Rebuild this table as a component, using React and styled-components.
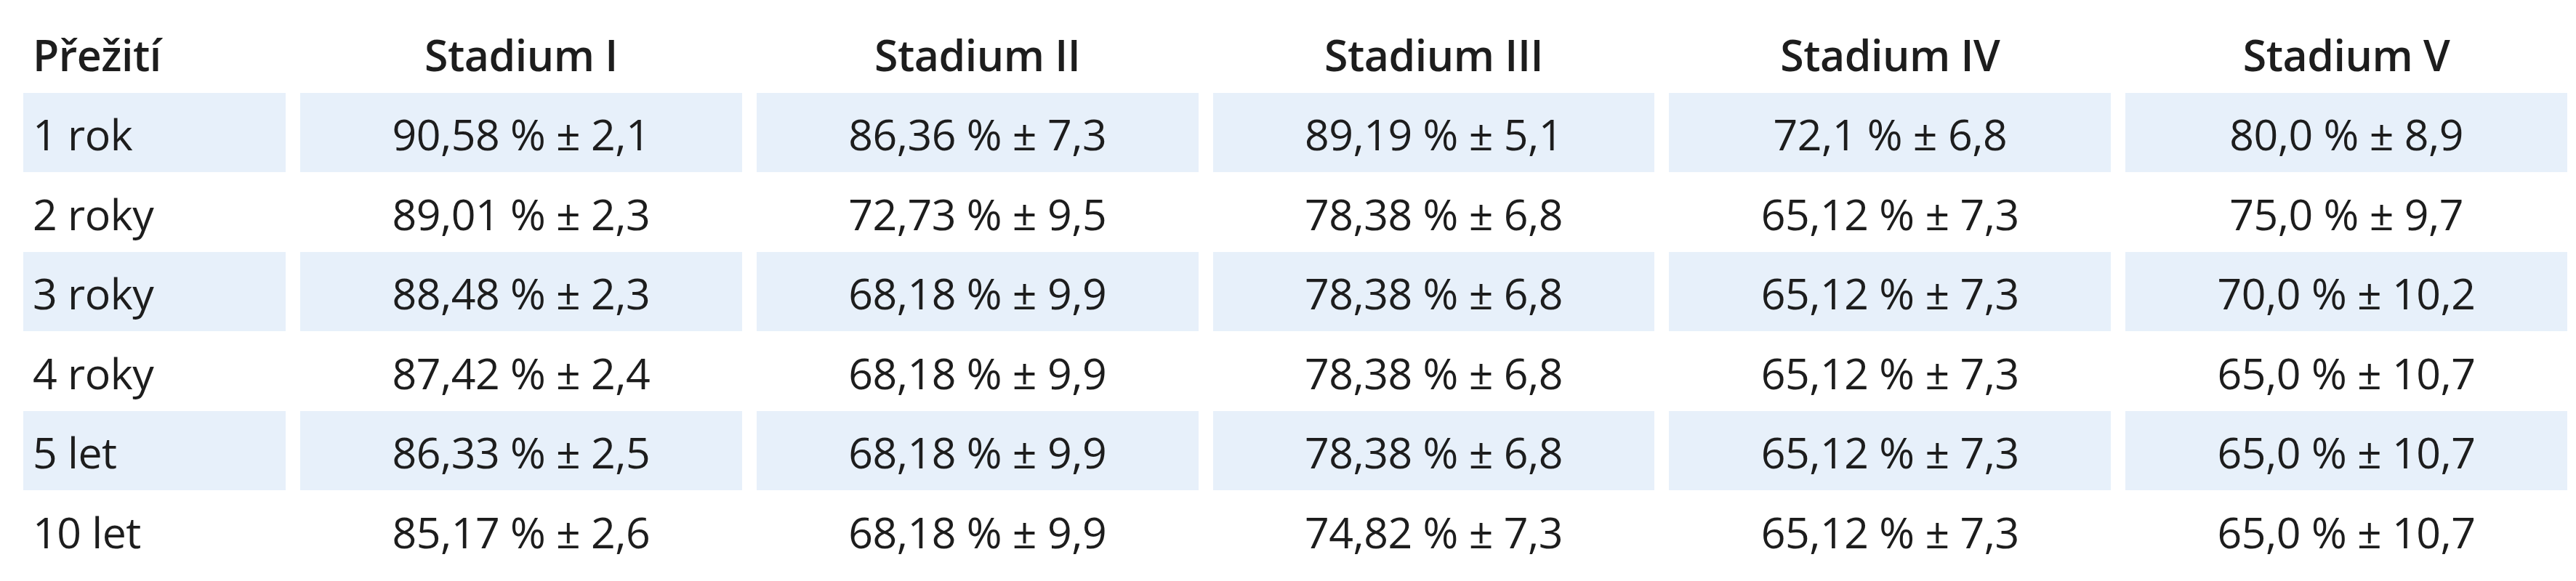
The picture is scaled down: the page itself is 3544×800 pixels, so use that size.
import React from 'react'
import styled, { createGlobalStyle } from 'styled-components'

const GlobalStyle = createGlobalStyle`
  html, body {
    margin: 0;
    padding: 0;
    background: #ffffff;
  }
  body {
    font-family: "Open Sans", "Liberation Sans", sans-serif;
    color: #1d1d1d;
  }
`;

const stages = ['Stadium I', 'Stadium II', 'Stadium III', 'Stadium IV', 'Stadium V'];

const rows = [
  ['1 rok', '90,58 % ± 2,1', '86,36 % ± 7,3', '89,19 % ± 5,1', '72,1 % ± 6,8', '80,0 % ± 8,9'],
  ['2 roky', '89,01 % ± 2,3', '72,73 % ± 9,5', '78,38 % ± 6,8', '65,12 % ± 7,3', '75,0 % ± 9,7'],
  ['3 roky', '88,48 % ± 2,3', '68,18 % ± 9,9', '78,38 % ± 6,8', '65,12 % ± 7,3', '70,0 % ± 10,2'],
  ['4 roky', '87,42 % ± 2,4', '68,18 % ± 9,9', '78,38 % ± 6,8', '65,12 % ± 7,3', '65,0 % ± 10,7'],
  ['5 let', '86,33 % ± 2,5', '68,18 % ± 9,9', '78,38 % ± 6,8', '65,12 % ± 7,3', '65,0 % ± 10,7'],
  ['10 let', '85,17 % ± 2,6', '68,18 % ± 9,9', '74,82 % ± 7,3', '65,12 % ± 7,3', '65,0 % ± 10,7'],
];

function App() {
  return (
    <>
      <GlobalStyle />
      <Table>
        <Row>
          <Cell $head $first>Přežití</Cell>
          {stages.map((s) => (
            <Cell key={s} $head>{s}</Cell>
          ))}
        </Row>
        {rows.map((r, i) => (
          <Row key={r[0]}>
            {r.map((v, j) => (
              <Cell key={j} $first={j === 0} $shaded={i % 2 === 0}>{v}</Cell>
            ))}
          </Row>
        ))}
      </Table>
    </>
  )
}

export default App;

const Table = styled.div`
  width: 3544px;
  box-sizing: border-box;
  padding: 18px 12px 0 32px;
  display: flex;
  flex-direction: column;
`;

const Row = styled.div`
  display: grid;
  grid-template-columns: 361px repeat(5, 1fr);
  column-gap: 20px;
  height: 109.5px;
`;

const Cell = styled.div`
  display: flex;
  align-items: center;
  justify-content: ${(p) => (p.$first ? 'flex-start' : 'center')};
  padding-left: ${(p) => (p.$first ? '13px' : '0')};
  padding-top: 4px;
  box-sizing: border-box;
  background: ${(p) => (p.$shaded ? '#e7f0fa' : 'transparent')};
  font-size: 59px;
  font-weight: ${(p) => (p.$head ? 600 : 400)};
  white-space: nowrap;
  letter-spacing: -0.5px;
`;
